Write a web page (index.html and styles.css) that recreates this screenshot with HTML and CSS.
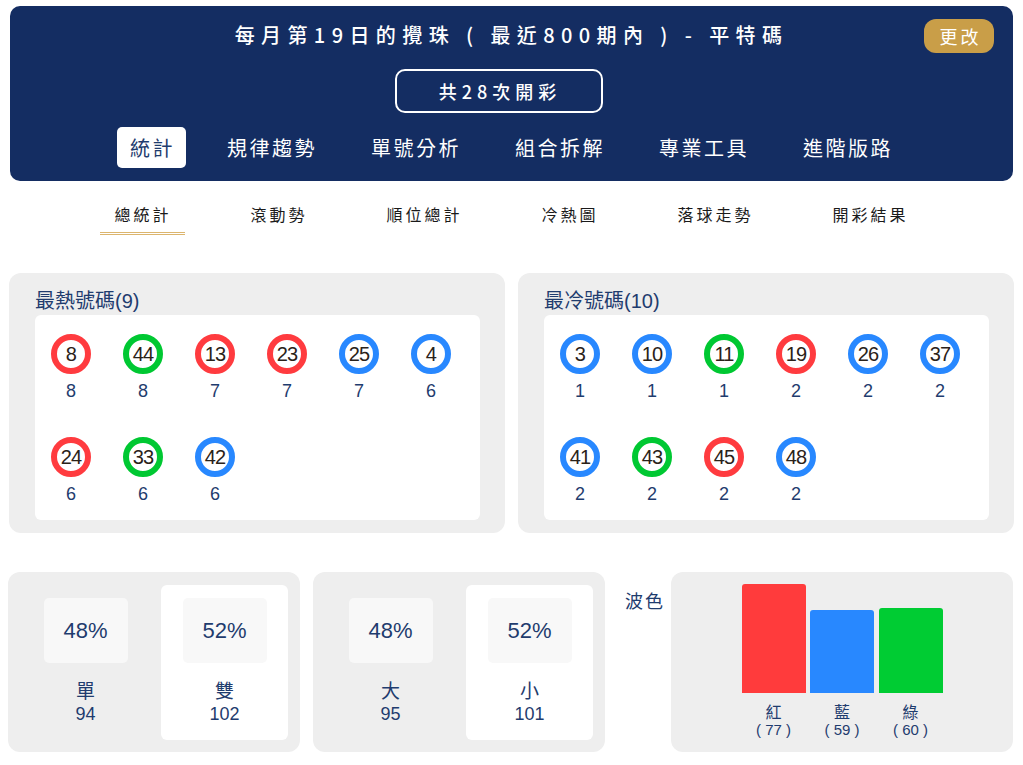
FILE: index.html
```html
<!DOCTYPE html>
<html lang="zh-Hant">
<head>
<meta charset="utf-8">
<title>平特碼統計</title>
<link rel="stylesheet" href="styles.css">
</head>
<body>
<div class="page">
  <header class="hero">
    <div class="hero-top">
      <div class="spacer"></div>
      <h1 class="title">每月第19日的攪珠 ( 最近800期內 ) - 平特碼</h1>
      <div class="change-wrap"><button class="change">更改</button></div>
    </div>
    <div class="count-wrap"><div class="count">共28次開彩</div></div>
    <nav class="tabs">
      <a class="tab active">統計</a>
      <a class="tab">規律趨勢</a>
      <a class="tab">單號分析</a>
      <a class="tab">組合拆解</a>
      <a class="tab">專業工具</a>
      <a class="tab">進階版路</a>
    </nav>
  </header>

  <nav class="subtabs">
    <a class="subtab active">總統計</a>
    <a class="subtab">滾動勢</a>
    <a class="subtab">順位總計</a>
    <a class="subtab">冷熱圖</a>
    <a class="subtab">落球走勢</a>
    <a class="subtab">開彩結果</a>
  </nav>

  <section class="hotcold">
    <div class="panel">
      <h2 class="panel-title">最熱號碼(9)</h2>
      <div class="balls">
        <div class="cell"><span class="ball red">8</span><span class="cnt">8</span></div>
        <div class="cell"><span class="ball green">44</span><span class="cnt">8</span></div>
        <div class="cell"><span class="ball red">13</span><span class="cnt">7</span></div>
        <div class="cell"><span class="ball red">23</span><span class="cnt">7</span></div>
        <div class="cell"><span class="ball blue">25</span><span class="cnt">7</span></div>
        <div class="cell"><span class="ball blue">4</span><span class="cnt">6</span></div>
        <div class="cell"><span class="ball red">24</span><span class="cnt">6</span></div>
        <div class="cell"><span class="ball green">33</span><span class="cnt">6</span></div>
        <div class="cell"><span class="ball blue">42</span><span class="cnt">6</span></div>
      </div>
    </div>
    <div class="panel">
      <h2 class="panel-title">最冷號碼(10)</h2>
      <div class="balls">
        <div class="cell"><span class="ball blue">3</span><span class="cnt">1</span></div>
        <div class="cell"><span class="ball blue">10</span><span class="cnt">1</span></div>
        <div class="cell"><span class="ball green">11</span><span class="cnt">1</span></div>
        <div class="cell"><span class="ball red">19</span><span class="cnt">2</span></div>
        <div class="cell"><span class="ball blue">26</span><span class="cnt">2</span></div>
        <div class="cell"><span class="ball blue">37</span><span class="cnt">2</span></div>
        <div class="cell"><span class="ball blue">41</span><span class="cnt">2</span></div>
        <div class="cell"><span class="ball green">43</span><span class="cnt">2</span></div>
        <div class="cell"><span class="ball red">45</span><span class="cnt">2</span></div>
        <div class="cell"><span class="ball blue">48</span><span class="cnt">2</span></div>
      </div>
    </div>
  </section>

  <section class="stats">
    <div class="pair">
      <div class="half">
        <div class="pct">48%</div>
        <div class="lbl">單</div>
        <div class="num">94</div>
      </div>
      <div class="half on">
        <div class="pct">52%</div>
        <div class="lbl">雙</div>
        <div class="num">102</div>
      </div>
    </div>
    <div class="pair">
      <div class="half">
        <div class="pct">48%</div>
        <div class="lbl">大</div>
        <div class="num">95</div>
      </div>
      <div class="half on">
        <div class="pct">52%</div>
        <div class="lbl">小</div>
        <div class="num">101</div>
      </div>
    </div>
    <div class="wave">
      <div class="wave-label">波色</div>
      <div class="wave-panel">
        <div class="bars">
          <div class="bar-col">
            <div class="bar-area"><div class="bar red-bg" style="height:109px"></div></div>
            <div class="bar-lbl">紅</div>
            <div class="bar-num">( 77 )</div>
          </div>
          <div class="bar-col">
            <div class="bar-area"><div class="bar blue-bg" style="height:83px"></div></div>
            <div class="bar-lbl">藍</div>
            <div class="bar-num">( 59 )</div>
          </div>
          <div class="bar-col">
            <div class="bar-area"><div class="bar green-bg" style="height:85px"></div></div>
            <div class="bar-lbl">綠</div>
            <div class="bar-num">( 60 )</div>
          </div>
        </div>
      </div>
    </div>
  </section>
</div>
</body>
</html>
```

FILE: styles.css
```css
* { box-sizing: border-box; }
html, body { margin: 0; padding: 0; background: #ffffff; }
body {
  font-family: "Noto Sans CJK TC", "Noto Sans", sans-serif;
  color: #1f3c6e;
}
.page { padding: 6px 10px 0 10px; width: 1023px; }

/* header */
.hero {
  background: #142d62;
  border-radius: 10px;
  padding: 13px 19px 13px 19px;
  color: #ffffff;
}
.hero-top {
  display: grid;
  grid-template-columns: 1fr auto 1fr;
  align-items: center;
  height: 34px;
}
.title {
  margin: 0;
  padding-bottom: 3px;
  font-size: 20px;
  font-weight: 500;
  letter-spacing: 6.4px;
  line-height: 31px;
  white-space: nowrap;
}
.change-wrap { display: flex; justify-content: flex-end; }
.change {
  background: #c99e48;
  color: #ffffff;
  border: none;
  border-radius: 12px;
  width: 70px;
  height: 34px;
  font-family: "Noto Sans CJK TC", sans-serif;
  font-size: 18px;
  letter-spacing: 3px;
  padding: 0 0 0 3px;
}
.count-wrap { display: flex; justify-content: center; margin-top: 16px; padding-right: 25px; }
.count {
  width: 208px;
  height: 44px;
  border: 2px solid #ffffff;
  border-radius: 10px;
  display: flex;
  align-items: center;
  justify-content: center;
  font-size: 18px;
  font-weight: 500;
  letter-spacing: 5px;
  padding-left: 2px;
}
.tabs {
  display: flex;
  justify-content: center;
  gap: 28px;
  margin-top: 14px;
}
.tab {
  display: block;
  height: 41px;
  line-height: 41px;
  padding: 0 13px;
  font-size: 20px;
  letter-spacing: 2.5px;
  color: #ffffff;
  border-radius: 5px;
}
.tabs .tab:first-child { padding-left: 13px; padding-right: 11px; }
.tab.active { background: #ffffff; color: #1f3c6e; }

/* sub tabs */
.subtabs {
  display: flex;
  justify-content: center;
  gap: 51px;
  margin-top: 22px;
}
.subtab {
  display: block;
  padding: 0 14px 7px 14px;
  font-size: 16px;
  line-height: 22px;
  letter-spacing: 3px;
  color: #1a1a1a;
  border-bottom: 3px double transparent;
  white-space: nowrap;
}
.subtab.active { border-bottom-color: #dcb56e; }

/* hot / cold */
.hotcold {
  display: grid;
  grid-template-columns: 1fr 1fr;
  gap: 13px;
  margin: 38px -1px 0 -1px;
}
.panel {
  background: #eeeeee;
  border-radius: 12px;
  padding: 16px 25px 13px 26px;
}
.panel-title {
  margin: 0 0 2px 0;
  font-family: "Liberation Sans", "Noto Sans CJK TC", sans-serif;
  font-size: 20px;
  font-weight: 400;
  line-height: 24px;
  color: #1f3c6e;
}
.balls {
  background: #ffffff;
  border-radius: 6px;
  height: 205px;
  padding-top: 19px;
  display: grid;
  grid-template-columns: repeat(6, 72px);
  grid-auto-rows: 67px;
  row-gap: 36px;
  align-content: start;
}
.cell {
  display: flex;
  flex-direction: column;
  align-items: center;
}
.ball {
  width: 40px;
  height: 40px;
  border-radius: 50%;
  border: 6px solid;
  background: #ffffff;
  display: flex;
  align-items: center;
  justify-content: center;
  font-family: "Liberation Sans", Arial, sans-serif;
  font-size: 20px;
  color: #2a2219;
  letter-spacing: -0.8px;
}
.ball.red { border-color: #ff3b3f; }
.ball.green { border-color: #00c832; }
.ball.blue { border-color: #2888ff; }
.cnt {
  margin-top: 7px;
  font-family: "Liberation Sans", Arial, sans-serif;
  font-size: 18px;
  line-height: 20px;
  color: #1f3c6e;
}

/* stats row */
.stats {
  display: flex;
  gap: 13px;
  margin: 39px 0 0 -2px;
}
.pair {
  width: 292px;
  height: 180px;
  background: #eeeeee;
  border-radius: 12px;
  padding: 13px 12px 12px 14px;
  display: flex;
  gap: 12px;
}
.half {
  width: 127px;
  border-radius: 6px;
  padding-top: 13px;
  display: flex;
  flex-direction: column;
  align-items: center;
  font-family: "Liberation Sans", "Noto Sans CJK TC", sans-serif;
  color: #1f3c6e;
}
.half.on { background: #ffffff; }
.pct {
  width: 84px;
  height: 65px;
  background: #f8f8f8;
  border-radius: 5px;
  display: flex;
  align-items: center;
  justify-content: center;
  font-size: 22px;
}
.lbl {
  margin-top: 15px;
  font-family: "Noto Sans CJK TC", sans-serif;
  font-size: 19px;
  line-height: 24px;
}
.num {
  font-size: 18px;
  line-height: 22px;
  margin-top: 1px;
}

.wave {
  flex: 1;
  display: flex;
  align-items: flex-start;
}
.wave-label {
  margin: 16px 0 0 7px;
  width: 46px;
  font-size: 18px;
  line-height: 24px;
  letter-spacing: 2px;
  color: #1f3c6e;
}
.wave-panel {
  flex: 1;
  height: 180px;
  background: #eeeeee;
  border-radius: 12px;
  display: flex;
  justify-content: center;
  padding-top: 12px;
}
.bars { display: flex; gap: 4.5px; }
.bar-col {
  width: 64px;
  display: flex;
  flex-direction: column;
  align-items: center;
}
.bar-area {
  height: 109px;
  width: 64px;
  display: flex;
  align-items: flex-end;
}
.bar { width: 64px; border-radius: 3px 3px 0 0; }
.red-bg { background: #ff3b3c; }
.blue-bg { background: #2888ff; }
.green-bg { background: #00cc33; }
.bar-lbl {
  margin-top: 8px;
  font-size: 16px;
  line-height: 20px;
  color: #1f3c6e;
}
.bar-num {
  font-family: "Liberation Sans", sans-serif;
  font-size: 15px;
  line-height: 18px;
  color: #1f3c6e;
  white-space: pre;
}
```
